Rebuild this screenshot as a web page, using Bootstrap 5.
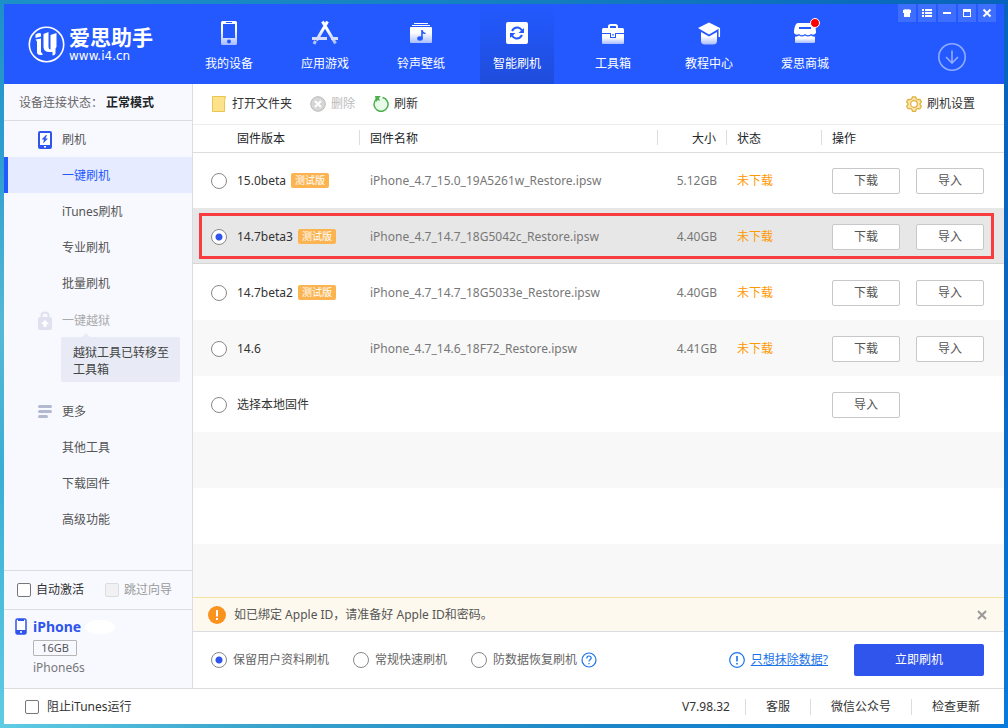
<!DOCTYPE html>
<html lang="zh-CN">
<head>
<meta charset="utf-8">
<meta name="viewport" content="width=device-width, initial-scale=1">
<title>爱思助手</title>
<link href="https://cdn.jsdelivr.net/npm/bootstrap@5.3.0/dist/css/bootstrap.min.css" rel="stylesheet">
<style>
:root{--line:#dcdde0;--blue:#2f55ec;--brand:#2359ff}
body{font-family:"Noto Sans","Noto Sans CJK SC",sans-serif;font-size:12px;line-height:18px;color:#333;
  min-height:100vh;padding:4px;
  background:linear-gradient(to right,#1c90c8,#1480c0 50%,#0763bb) top/100% 4px no-repeat,
   linear-gradient(to right,#5fcce4,#3aa4cc 25%,#1c86c8 60%,#087bdc) bottom/100% 4px no-repeat,
   linear-gradient(#1c90c8,#2f9fd0 22%,#55b9d6 45%,#3aaed4 65%,#5fcce4) left/4px 100% no-repeat,
   linear-gradient(#0763bb,#0a68c4 50%,#087bdc) right/4px 100% no-repeat}
.app{min-height:calc(100vh - 8px);background:#fff}
.top-bar{background:var(--brand);height:80px;color:#fff}
.brand-box{width:188px;padding:0 0 0 24px;gap:4px}
.brand-name{font-size:21px;line-height:24px;font-weight:700;height:24px}
.brand-url{font-family:"DejaVu Sans","Noto Sans",sans-serif;font-size:12px;line-height:14px}
.tabs{gap:22px}
.tab{width:74px;color:#fff;padding-top:16px;gap:7px}
.tab:hover{color:#fff}
.tab.active{background:linear-gradient(var(--brand),#1f4ddb)}
.alert-dot{width:10px;height:10px;top:-2px;right:-1px;background:#f00;border:1px solid #fff}
.win-btns{gap:2px;padding-right:8px}
.win-btns button{width:18px;height:18px;background:#3e6eff}
.plain{border:0;background:none;padding:0;color:inherit}
.down-btn{margin:21px 38px 0 0}
.side{width:189px;background:#f8f9ff;border-right:1px solid var(--line)}
.state{height:37px;padding:2px 0 0 15px;gap:3px;border-bottom:1px solid var(--line);color:#666}
.side-item{height:36px;padding:2px 0 0 58px;color:#555;position:relative}
.side-item svg{position:absolute;left:32px}
.side-item.active{color:var(--brand);background:#e6ebff;border-left:4px solid var(--brand);padding-left:54px}
.side-item.locked{margin-top:1px;color:#aaa}
.side-tip{width:119px;margin:-1px 0 11px 57px;padding:7px 11px 4px 12px;line-height:17px;background:#e8ebf5;color:#444;border-radius:2px;position:relative}
.side-tip::before{content:"";position:absolute;top:-4px;left:21px;border:4px solid transparent;border-top:0;border-bottom-color:#e8ebf5}
.checks{height:39px;border-top:1px solid var(--line);padding:0 13px;gap:21px}
.checks label{gap:5px}
.device{height:79px;border-top:1px solid var(--line);padding:7px 0 0 11px;gap:6px}
.device h2{font-size:14px;line-height:20px;font-weight:700;color:var(--blue)}
.masked{width:30px;height:14px;border-radius:50%;background:#fff}
.cap{width:44px;height:16px;border:1px solid #b5b5b5;font-size:11px;line-height:14px;color:#555;margin:3px 0;border-radius:1px}
.form-check-input{margin:0;width:14px;height:14px;border:1px solid #777;background-color:#fff;flex:none}
.form-check-input[type=checkbox]{border-radius:2px}
.form-check-input[type=radio]{width:16px;height:16px;border-color:#888}
.form-check-input[type=radio]:checked{background:#fff radial-gradient(circle,var(--blue) 3px,transparent 4px);border-color:#888}
.form-check-input:disabled{opacity:1;border-color:#ddd;background-color:#f1f1f4}
.tools{height:41px;border-bottom:1px solid #ececec;padding:0 29px 0 18px;gap:18px}
.tools button{gap:5px}
.fw{table-layout:fixed;line-height:18px;margin:0}
.fw>thead th{height:27px;padding:4px 10px 4px 11px;font-weight:400;border-bottom:1px solid var(--line);background:linear-gradient(var(--line),var(--line)) left 5px/1px 15px no-repeat}
.fw>thead th:first-child{padding-left:44px;background:none}
.fw>tbody td{height:56px;padding:1px 9px 0 11px;border:0;vertical-align:middle;color:#777;background:none;box-shadow:none;white-space:nowrap}
.fw>tbody td:first-child{padding-left:18px;color:#333}
.fw label{gap:10px}
.fw .todo{color:#f90}
.fw tr.alt{background:#f8f8f8}
.fw tr.picked{background:#e7e7e7;position:relative;box-shadow:inset 0 -1px #d6d6d6}
.fw tr.picked td:last-child::after{content:"";position:absolute;inset:5px 10px 5px 6px;border:3px solid #f93c3f;pointer-events:none}
.beta{background:#fbb450;color:#fff;font-size:10px;line-height:15px;padding:0 4px;border-radius:2px;font-weight:400;margin-left:-5px}
.op{width:68px;height:26px;padding:0;font-size:12px;line-height:18px;border:1px solid #c8c8c8;border-radius:2px;background:#fff;color:#555}
.stripes{background:repeating-linear-gradient(#f8f8f8 0 56px,#fff 56px 112px)}
.notice{height:35px;border-top:1px solid #f6e3a4;border-bottom:1px solid var(--line);background:#fef9ee;padding:0 16px 0 15px;gap:8px;color:#555}
.mode{height:56px;padding:0 20px 0 18px;gap:24px;color:#666}
.mode label{gap:6px}
.erase{color:#1a73e8;gap:6px;padding-right:2px}
.go{width:130px;height:32px;padding:0;font-size:12px;border-radius:2px;background:var(--blue);color:#fff;border:0}
.foot{height:36px;border-top:1px solid var(--line);padding:0 4px 0 21px}
.foot-links>*{color:#333;padding:0 20px;line-height:16px;text-decoration:none}
.foot-links>:first-child{padding-right:15px}
.foot-links>*+*{border-left:1px solid var(--line)}
</style>
</head>
<body>
<svg width="0" height="0" class="position-absolute" aria-hidden="true"><defs><linearGradient id="fade" x2="0" y2="1"><stop offset=".35" stop-color="#fff"/><stop offset="1" stop-color="#a9bdff"/></linearGradient></defs></svg>
<div class="app d-flex flex-column">
 <header class="top-bar d-flex">
  <div class="brand-box d-flex align-items-center">
   <svg width="37" height="37" viewBox="0 0 37 37" fill="none" stroke="#fff"><circle cx="18.500" cy="18.500" r="17.200" stroke-width="1.600"/><path fill="#fff" stroke="none" d="M7.500 8.500q3-2.500 5.500-1v3l-5.500 1.500zM7.500 13.500l5.500-1V26l2 2.500q-5 1.500-6-1.500V15.500zM15.500 8l5-2v15q0 2.500 2 2.500V9l6-2v14l-1 1.500V27q0 2-3 2.500V26h-3q-6 0-6-5z"/></svg>
   <div><div class="brand-name">爱思助手</div><div class="brand-url">www.i4.cn</div></div>
  </div>
  <nav class="tabs d-flex me-auto">
   <a href="#" class="tab d-flex flex-column align-items-center text-decoration-none"><svg width="28" height="28" viewBox="0 0 28 28"><path fill="url(#fade)" fill-rule="evenodd" d="M7.500 1h13q1.500 0 1.500 1.500v21q0 1.500-1.500 1.500h-13Q6 25 6 23.500v-21Q6 1 7.500 1zM8 4v14h12V4z"/><path stroke="#2359ff" d="M11 2.500h6"/><circle cx="14" cy="21.500" r="2" fill="#2359ff"/></svg>我的设备</a>
   <a href="#" class="tab d-flex flex-column align-items-center text-decoration-none"><svg width="28" height="28" viewBox="0 0 28 28" fill="none" stroke="url(#fade)"><path stroke-width="3" d="M11.500 1.500l13 22M16.500 1.500l-11 19M4.500 21l-1.500 3"/><path stroke="#d5deff" stroke-width="3" d="M1 18.500h15M20 18.500h7"/></svg>应用游戏</a>
   <a href="#" class="tab d-flex flex-column align-items-center text-decoration-none"><svg width="28" height="28" viewBox="0 0 28 28"><path stroke="#fff" d="M7 3.500h14M5 5.500h18"/><path fill="url(#fade)" d="M3 8q0-1 1-1h20q1 0 1 1v14q0 1-1 1H4q-1 0-1-1z"/><ellipse cx="13" cy="18.500" rx="2.800" ry="2.200" fill="#2359ff"/><path d="M15 18.500V10q0 3 3.500 3.500" fill="none" stroke="#2359ff" stroke-width="1.600"/></svg>铃声壁纸</a>
   <a href="#" class="tab active d-flex flex-column align-items-center text-decoration-none" aria-current="page"><svg width="28" height="28" viewBox="0 0 28 28"><rect x="3" y="2" width="22" height="22" rx="2" fill="#fff"/><path fill="none" stroke="#2359ff" stroke-width="2" d="M9 11q2-4 6-3.500 2.500.5 4 3M19 15q-2 4-6 3.500-2.500-.5-4-3"/><path fill="#2359ff" d="M21 8v5h-5.500zM7 18v-5h5.500z"/></svg>智能刷机</a>
   <a href="#" class="tab d-flex flex-column align-items-center text-decoration-none"><svg width="28" height="28" viewBox="0 0 28 28"><path d="M10 8V6.500Q10 5 11.500 5h5Q18 5 18 6.500V8" fill="none" stroke="#fff" stroke-width="2"/><path fill="#fff" d="M3 9.500Q3 8 4.500 8h19Q25 8 25 9.500V13H3z"/><path fill="url(#fade)" d="M3 14h8v4h6v-4h8v9q0 1-1 1H4q-1 0-1-1z"/><path fill="#fff" fill-rule="evenodd" d="M12 13h4v4h-4zM13.300 14v1.500h1.400V14z"/></svg>工具箱</a>
   <a href="#" class="tab d-flex flex-column align-items-center text-decoration-none"><svg width="28" height="28" viewBox="0 0 28 28"><path fill="#fff" d="M14 2.500L25 8l-11 6.500L3 8z"/><path fill="url(#fade)" d="M6 12l8 4.500 8-4.500v9q0 3.500-4 3.500h-8q-4 0-4-3.500z"/><path stroke="#fff" stroke-width="1.500" d="M24.300 8v9"/></svg>教程中心</a>
   <a href="#" class="tab d-flex flex-column align-items-center text-decoration-none"><span class="position-relative d-flex"><svg width="28" height="28" viewBox="0 0 28 28"><path fill="#fff" d="M7 3h14q3 0 4 8v2q-2 3-5 1-3 2.500-6 0-3 2.500-6 0-3 2-5-1v-2q1-8 4-8z"/><path stroke="#2359ff" stroke-width="2" d="M8 8h12"/><path fill="url(#fade)" d="M4 16.500q2 .5 4-1 3 2 6 0 3 2 6 0 2 1.500 4 1V22q0 1-1 1H5q-1 0-1-1z"/></svg><span class="alert-dot position-absolute rounded-circle"></span></span>爱思商城</a>
  </nav>
  <div class="d-flex flex-column align-items-end">
   <div class="win-btns d-flex">
    <button class="plain d-flex" aria-label="皮肤"><svg width="18" height="18"><path fill="#fff" d="M5 6l3-1q1 1 2 0l3 1v3h-1v4H6V9H5z"/></svg></button>
    <button class="plain d-flex" aria-label="菜单"><svg width="18" height="18"><path stroke="#fff" stroke-width="2" d="M4 6h2M7 6h7M4 9h2M7 9h7M4 12h2M7 12h7"/></svg></button>
    <button class="plain d-flex" aria-label="最小化"><svg width="18" height="18"><path fill="#fff" d="M5 8h8v2H5z"/></svg></button>
    <button class="plain d-flex" aria-label="最大化"><svg width="18" height="18"><path fill="#fff" fill-rule="evenodd" d="M5 5h8v8H5zM6 8v4h6V8z"/></svg></button>
    <button class="plain d-flex" aria-label="关闭"><svg width="18" height="18"><path stroke="#fff" stroke-width="2" d="M5.500 5.500l7 7M12.500 5.500l-7 7"/></svg></button>
   </div>
   <button class="plain down-btn d-flex" aria-label="下载管理"><svg width="28" height="28" fill="none" stroke="#91acff" stroke-width="1.600"><circle cx="14" cy="14" r="13.200"/><path d="M14 7.500v12M8 14l6 6 6-6"/></svg></button>
  </div>
 </header>

 <div class="d-flex flex-fill">
  <aside class="side d-flex flex-column flex-shrink-0">
   <div class="state d-flex align-items-center">设备连接状态：<strong class="text-dark">正常模式</strong></div>
   <nav class="mb-auto">
    <div class="side-item d-flex align-items-center"><svg width="18" height="20" viewBox="0 0 18 20"><rect x="3" y="2" width="12" height="16" rx="1" fill="#fff" stroke="#2f55ec" stroke-width="2"/><path fill="#2f55ec" d="M3 15h12v3H3zM10 5l-4.500 4.500h2.500L7 13.500l5-5H9.500L11 5z"/><path fill="#fff" d="M8 16h2v1.500H8z"/></svg>刷机</div>
    <a href="#" class="side-item active d-flex align-items-center text-decoration-none">一键刷机</a>
    <a href="#" class="side-item d-flex align-items-center text-decoration-none">iTunes刷机</a>
    <a href="#" class="side-item d-flex align-items-center text-decoration-none">专业刷机</a>
    <a href="#" class="side-item d-flex align-items-center text-decoration-none">批量刷机</a>
    <div class="side-item locked d-flex align-items-center"><svg width="18" height="20" viewBox="0 0 18 20"><path d="M5.500 7V4.500q0-3 3.500-3t3.500 3V7" fill="none" stroke="#dfe2ee" stroke-width="2"/><rect x="2" y="6" width="14" height="13" rx="2" fill="#dfe2ee"/><path fill="#fff" d="M9 9l4 4h-2.500v3h-3v-3H5z"/></svg>一键越狱</div>
    <div class="side-tip">越狱工具已转移至工具箱</div>
    <div class="side-item d-flex align-items-center"><svg width="18" height="20" viewBox="0 0 18 20"><path stroke="#b2b9d0" stroke-width="3" stroke-linecap="round" d="M3.500 4.500h11M3.500 9.500h11M3.500 14.500h7"/></svg>更多</div>
    <a href="#" class="side-item d-flex align-items-center text-decoration-none">其他工具</a>
    <a href="#" class="side-item d-flex align-items-center text-decoration-none">下载固件</a>
    <a href="#" class="side-item d-flex align-items-center text-decoration-none">高级功能</a>
   </nav>
   <div class="checks d-flex align-items-center">
    <label class="d-flex align-items-center"><input class="form-check-input" type="checkbox">自动激活</label>
    <label class="d-flex align-items-center" style="color:#999"><input class="form-check-input" type="checkbox" disabled>跳过向导</label>
   </div>
   <div class="device d-flex">
    <svg width="12" height="18" viewBox="0 0 12 18"><rect x="1" y="2" width="10" height="15" rx="1.500" fill="#fff" stroke="#2f55ec" stroke-width="1.500"/><path fill="#2f55ec" d="M1 13h10v4H1zM3 2h6v2H3z"/><circle cx="6" cy="15" r="1" fill="#fff"/></svg>
    <div>
     <div class="d-flex align-items-center gap-1"><h2 class="m-0">iPhone</h2><span class="masked"></span></div>
     <div class="cap text-center">16GB</div>
     <div style="color:#777">iPhone6s</div>
    </div>
   </div>
  </aside>

  <main class="d-flex flex-column flex-fill">
   <div class="tools d-flex align-items-center">
    <button class="plain d-flex align-items-center"><svg width="16" height="18"><path fill="#fde28c" stroke="#eac54f" d="M1.500 1.500h13l-1 4v11h-12z"/></svg>打开文件夹</button>
    <button class="plain d-flex align-items-center" style="color:#bbb" disabled><svg width="16" height="16"><circle cx="8" cy="8" r="7.300" fill="#d6d6d6" stroke="#bbb"/><path stroke="#fff" stroke-width="2" d="M5 5l6 6M11 5l-6 6"/></svg>删除</button>
    <button class="plain d-flex align-items-center"><svg width="16" height="16"><circle cx="8" cy="8.500" r="7" fill="#e8fbe8"/><path fill="none" stroke="#4caf50" stroke-width="1.500" d="M9.500 1.500a7 7 0 1 1-6.500 2"/><path fill="#4caf50" d="M2 0h6L6 2l1 3-2-1-2 2z"/></svg>刷新</button>
    <button class="plain d-flex align-items-center ms-auto"><svg width="16" height="16"><path fill="#fde6a8" stroke="#dfae3c" stroke-width="1.200" stroke-linejoin="round" d="M6.500.8h3l.8 2 1.400.8 2.200-.3 1.500 2.600L14 7.600v1l1.400 1.600-1.500 2.600-2.200-.3-1.400.8-.8 2h-3l-.8-2-1.400-.8-2.200.3L.6 10.200 2 8.600v-1L.6 5.900l1.500-2.600 2.200.3 1.400-.8z"/><circle cx="8" cy="8" r="3.300" fill="#fff" stroke="#dfae3c" stroke-width="1.200"/></svg>刷机设置</button>
   </div>
   <table class="table fw w-100">
    <colgroup><col style="width:166px"><col><col style="width:69px"><col style="width:95px"><col style="width:183px"></colgroup>
    <thead><tr><th>固件版本</th><th>固件名称</th><th class="text-end">大小</th><th>状态</th><th>操作</th></tr></thead>
    <tbody>
     <tr><td><label class="d-flex align-items-center"><input class="form-check-input" type="radio" name="fw"><span>15.0beta</span><span class="beta">测试版</span></label></td><td>iPhone_4.7_15.0_19A5261w_Restore.ipsw</td><td class="text-end">5.12GB</td><td class="todo">未下载</td><td><button class="btn op me-3">下载</button><button class="btn op">导入</button></td></tr>
     <tr class="picked"><td><label class="d-flex align-items-center"><input class="form-check-input" type="radio" name="fw" checked><span>14.7beta3</span><span class="beta">测试版</span></label></td><td>iPhone_4.7_14.7_18G5042c_Restore.ipsw</td><td class="text-end">4.40GB</td><td class="todo">未下载</td><td><button class="btn op me-3">下载</button><button class="btn op">导入</button></td></tr>
     <tr><td><label class="d-flex align-items-center"><input class="form-check-input" type="radio" name="fw"><span>14.7beta2</span><span class="beta">测试版</span></label></td><td>iPhone_4.7_14.7_18G5033e_Restore.ipsw</td><td class="text-end">4.40GB</td><td class="todo">未下载</td><td><button class="btn op me-3">下载</button><button class="btn op">导入</button></td></tr>
     <tr class="alt"><td><label class="d-flex align-items-center"><input class="form-check-input" type="radio" name="fw"><span>14.6</span></label></td><td>iPhone_4.7_14.6_18F72_Restore.ipsw</td><td class="text-end">4.41GB</td><td class="todo">未下载</td><td><button class="btn op me-3">下载</button><button class="btn op">导入</button></td></tr>
     <tr><td><label class="d-flex align-items-center"><input class="form-check-input" type="radio" name="fw"><span>选择本地固件</span></label></td><td></td><td></td><td></td><td><button class="btn op">导入</button></td></tr>
    </tbody>
   </table>
   <div class="stripes flex-fill"></div>
   <div class="notice d-flex align-items-center">
    <svg width="18" height="18"><circle cx="9" cy="9" r="9" fill="#fa931e"/><path stroke="#fff" stroke-width="2" d="M9 4v6.500M9 12v2"/></svg>
    <span>如已绑定 Apple ID，请准备好 Apple ID和密码。</span>
    <button class="plain ms-auto d-flex" aria-label="关闭提示"><svg width="12" height="12"><path stroke="#999" stroke-width="2" d="M2 2l8 8M10 2l-8 8"/></svg></button>
   </div>
   <div class="mode d-flex align-items-center">
    <label class="d-flex align-items-center"><input class="form-check-input" type="radio" name="mode" checked>保留用户资料刷机</label>
    <label class="d-flex align-items-center"><input class="form-check-input" type="radio" name="mode">常规快速刷机</label>
    <span class="d-flex align-items-center"><label class="d-flex align-items-center me-1"><input class="form-check-input" type="radio" name="mode">防数据恢复刷机</label><svg width="16" height="16" fill="none" stroke="#1a73e8" stroke-width="1.200"><circle cx="8" cy="8" r="7"/><path d="M5.800 6.500q0-2.500 2.200-2.500t2.200 2q0 1-1.200 1.700-1 .6-1 1.800M8 11v1.300"/></svg></span>
    <span class="erase d-flex align-items-center ms-auto"><svg width="16" height="16" fill="none" stroke="#1a73e8" stroke-width="1.200"><circle cx="8" cy="8" r="7.300"/><path stroke-width="1.600" d="M8 4v5.500M8 11v1.500"/></svg><a href="#" style="color:inherit">只想抹除数据?</a></span>
    <button class="btn go">立即刷机</button>
   </div>
  </main>
 </div>

 <footer class="foot d-flex align-items-center justify-content-between">
  <label class="d-flex align-items-center gap-2"><input class="form-check-input" type="checkbox">阻止iTunes运行</label>
  <div class="foot-links d-flex"><span>V7.98.32</span><a href="#">客服</a><a href="#">微信公众号</a><a href="#">检查更新</a></div>
 </footer>
</div>
<script src="https://cdn.jsdelivr.net/npm/bootstrap@5.3.0/dist/js/bootstrap.bundle.min.js"></script>
</body>
</html>
